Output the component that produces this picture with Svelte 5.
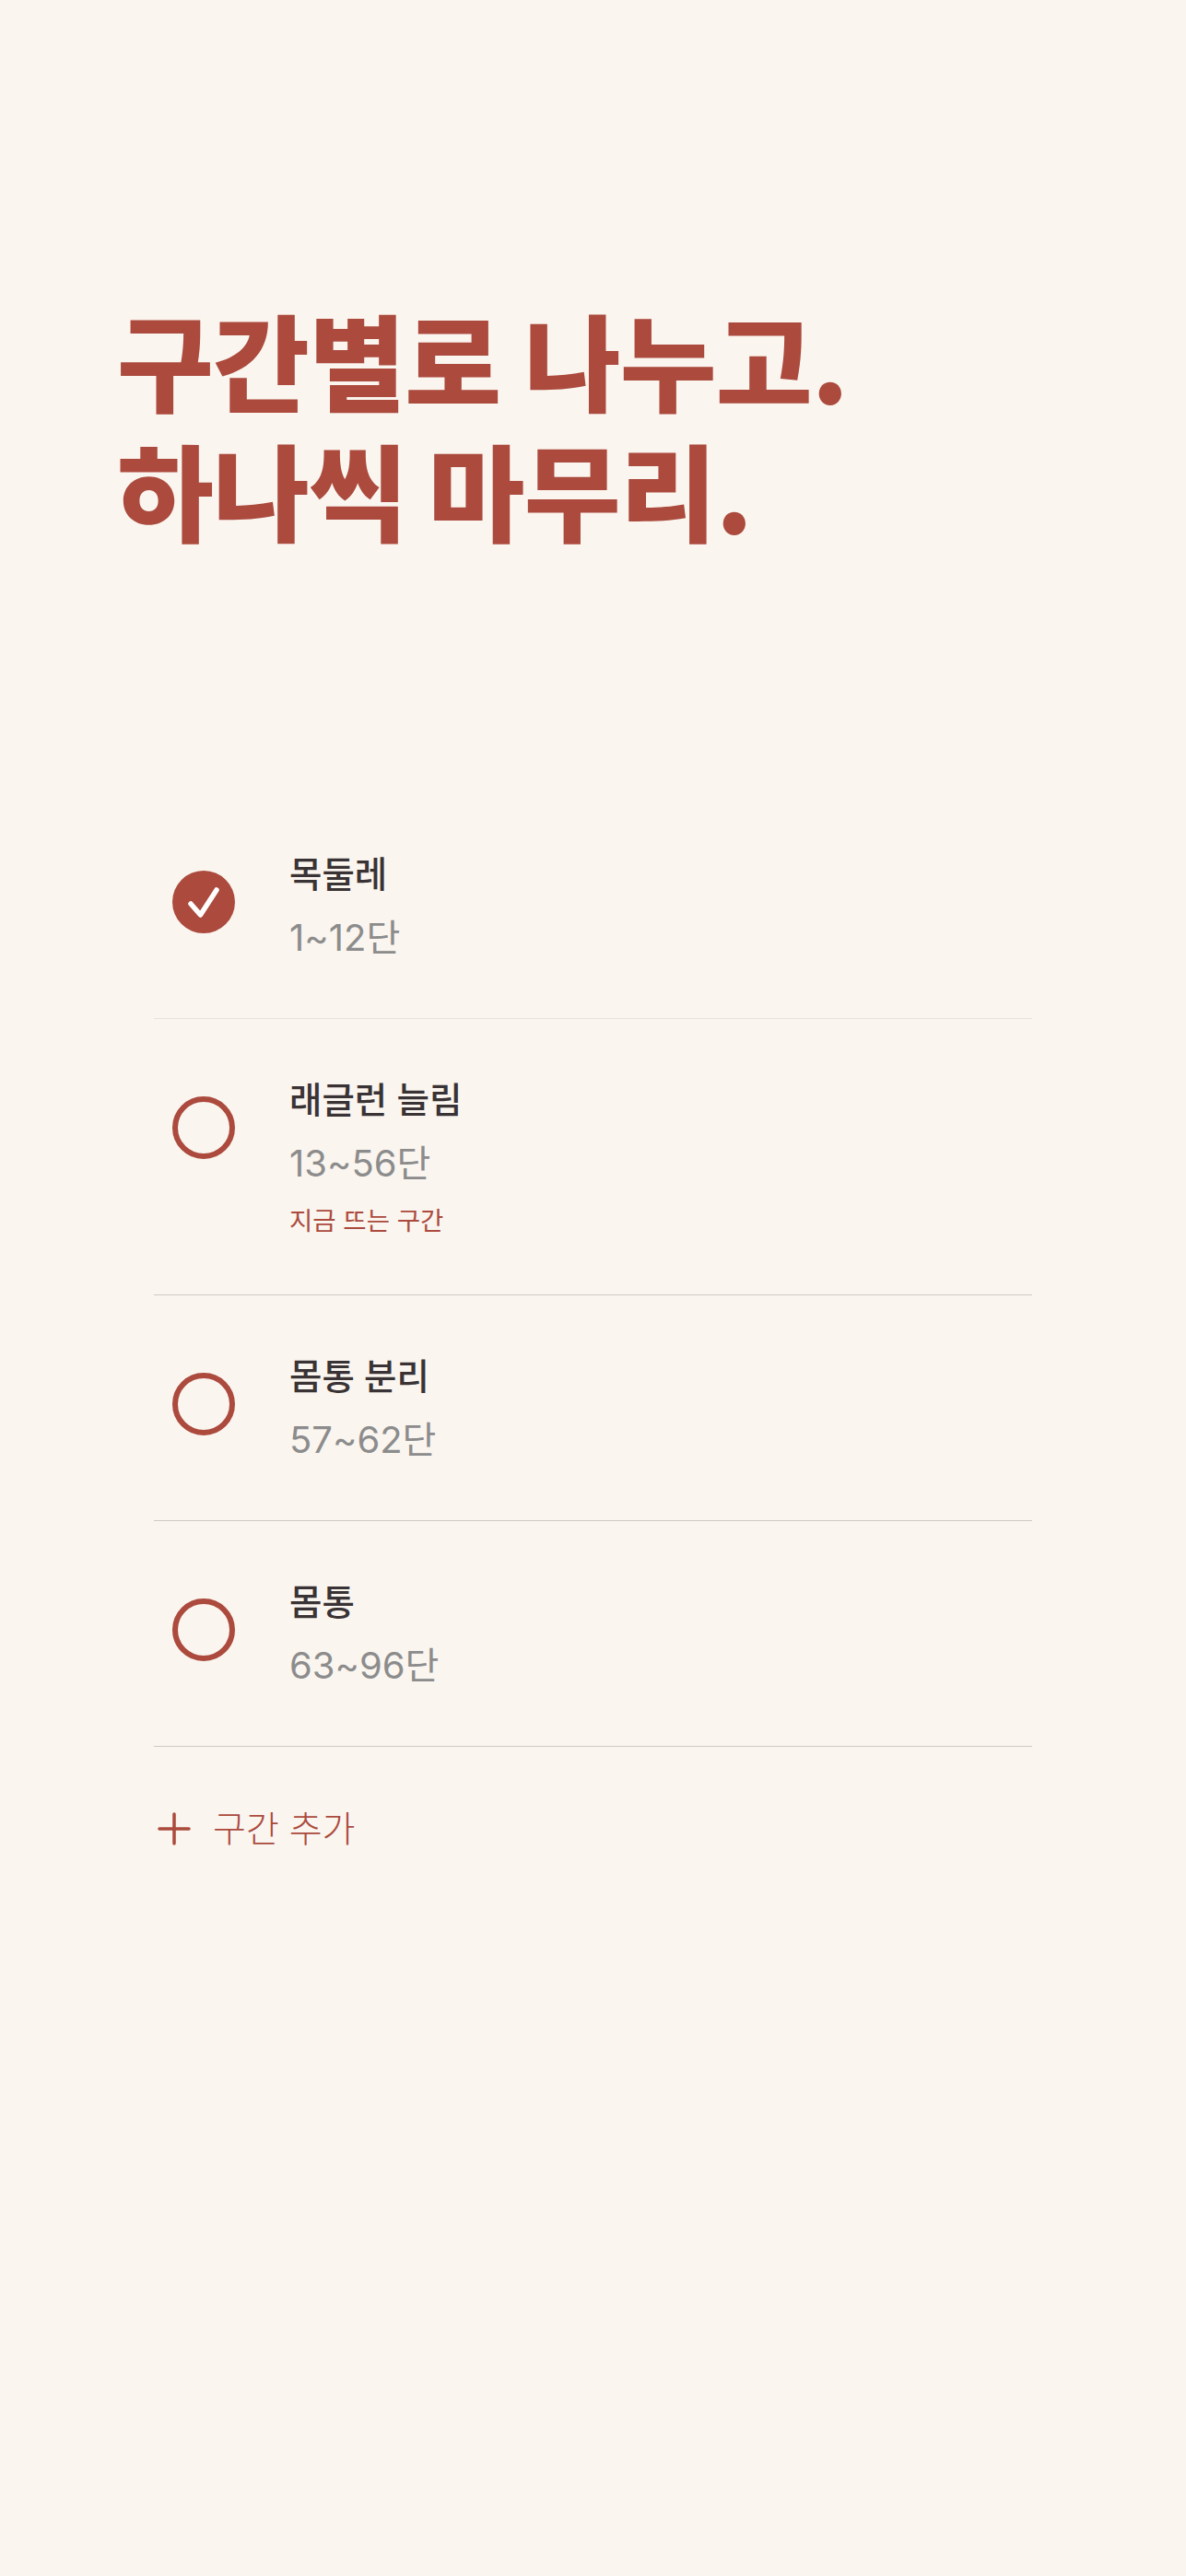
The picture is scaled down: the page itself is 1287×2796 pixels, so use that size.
<script>
  const rows = [
    { title: '목둘레', range: '1~12단', done: true },
    { title: '래글런 늘림', range: '13~56단', note: '지금 뜨는 구간' },
    { title: '몸통 분리', range: '57~62단' },
    { title: '몸통', range: '63~96단' }
  ];
</script>

<main>
  <h1><span>구간별로 나누고.</span><span>하나씩 마무리.</span></h1>
  <ul>
    {#each rows as row, i}
      <li class:light={i === 0}>
        <div class="mark" class:done={row.done}>
          {#if row.done}
            <svg viewBox="0 0 68 68" width="68" height="68" aria-hidden="true">
              <path d="M20 36l10.500 12L48 21" fill="none" stroke="#fff" stroke-width="5.500" stroke-linecap="round" stroke-linejoin="round" />
            </svg>
          {/if}
        </div>
        <div class="text">
          <div class="title">{row.title}</div>
          <div class="range">{row.range}</div>
          {#if row.note}<div class="note">{row.note}</div>{/if}
        </div>
      </li>
    {/each}
  </ul>
  <div class="add">
    <svg viewBox="0 0 36 36" width="36" height="36" aria-hidden="true">
      <path d="M18 2v32M2 18h32" fill="none" stroke="#ab4a3d" stroke-width="3.500" stroke-linecap="round" />
    </svg>
    <span>구간 추가</span>
  </div>
</main>

<style>
  :global(body) {
    margin: 0;
    background: #faf5ef;
  }
  main {
    height: 2796px;
    box-sizing: border-box;
    padding: 318px 167px 0;
    font-family: Inter, "Noto Sans CJK KR", sans-serif;
    overflow: hidden;
  }
  h1 {
    margin: 0 0 0 -40px;
    color: #ab4a3d;
    font-family: "Noto Sans CJK KR", sans-serif;
    font-weight: 900;
    font-size: 114px;
    line-height: 141px;
    letter-spacing: -0.800px;
    white-space: nowrap;
    height: 543px;
  }
  h1 span {
    display: block;
  }
  ul {
    list-style: none;
    margin: 0;
    padding: 0;
    width: 953px;
  }
  li {
    display: flex;
    box-sizing: border-box;
    padding: 84px 0 60px 20px;
    border-bottom: 1px solid #cfcac5;
  }
  li.light {
    border-bottom-color: #e6e1dc;
  }
  .mark {
    flex: none;
    box-sizing: border-box;
    width: 68px;
    height: 68px;
    border: 6px solid #ab4a3d;
    border-radius: 50%;
  }
  .mark.done {
    border: none;
    background: #ab4a3d;
  }
  .mark svg {
    display: block;
  }
  .text {
    margin: -24px 0 0 59px;
  }
  .title {
    color: #3a3335;
    font-size: 38.500px;
    font-weight: 500;
    line-height: 56px;
  }
  .range {
    margin-top: 14px;
    color: #8c8c8c;
    font-size: 40px;
    font-weight: 400;
    line-height: 54px;
  }
  .note {
    margin-top: 15px;
    color: #ab4a3d;
    font-size: 27.500px;
    font-weight: 400;
    line-height: 40px;
  }
  .add {
    display: flex;
    align-items: center;
    gap: 24px;
    margin-top: 66px;
    padding-left: 4px;
    color: #ab4a3d;
    font-size: 39px;
    font-weight: 300;
    line-height: 46px;
  }
  .add svg {
    display: block;
  }
</style>
